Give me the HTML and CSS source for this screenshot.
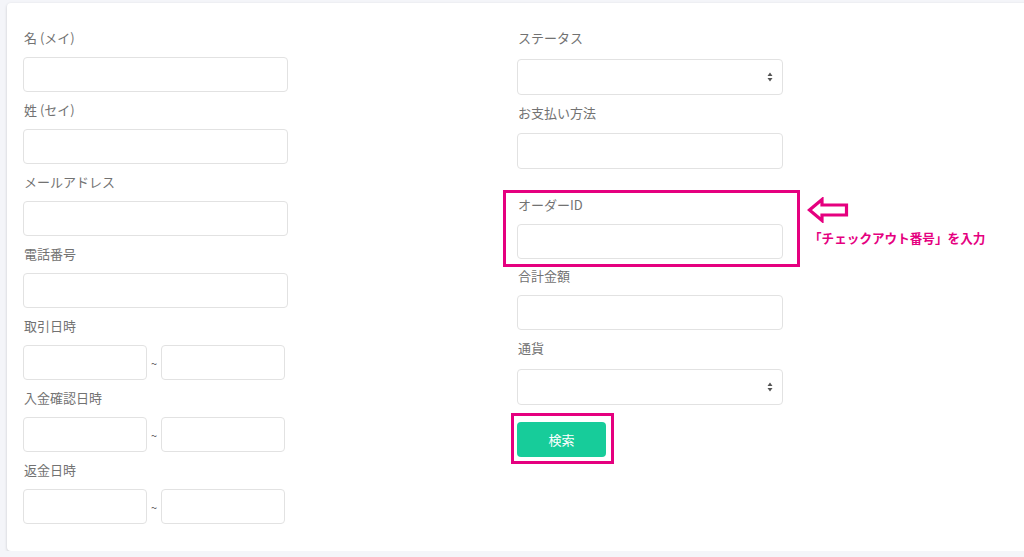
FILE: index.html
```html
<!DOCTYPE html>
<html>
<head>
    <meta charset="utf-8">
    <title>注文検索</title>
    <link rel="stylesheet" href="styles.css">
</head>
<body>
    <div class="card">
        <form class="search-form">
            <div class="column">
                <div class="field">
                    <label>名 (メイ)</label>
                    <input type="text" class="text-input">
                </div>
                <div class="field">
                    <label>姓 (セイ)</label>
                    <input type="text" class="text-input">
                </div>
                <div class="field">
                    <label>メールアドレス</label>
                    <input type="text" class="text-input">
                </div>
                <div class="field">
                    <label>電話番号</label>
                    <input type="text" class="text-input">
                </div>
                <div class="field">
                    <label>取引日時</label>
                    <div class="range">
                        <input type="text" class="text-input short">
                        <span class="tilde">~</span>
                        <input type="text" class="text-input short">
                    </div>
                </div>
                <div class="field">
                    <label>入金確認日時</label>
                    <div class="range">
                        <input type="text" class="text-input short">
                        <span class="tilde">~</span>
                        <input type="text" class="text-input short">
                    </div>
                </div>
                <div class="field">
                    <label>返金日時</label>
                    <div class="range">
                        <input type="text" class="text-input short">
                        <span class="tilde">~</span>
                        <input type="text" class="text-input short">
                    </div>
                </div>
            </div>

            <div class="column right">
                <div class="field">
                    <label>ステータス</label>
                    <div class="select-box">
                        <span class="select-arrows">
                            <svg width="6" height="10" viewBox="0 0 6 10"><path d="M3 0.5 L5.5 4 L0.5 4 Z M3 9.5 L5.5 6 L0.5 6 Z" fill="#555"/></svg>
                        </span>
                    </div>
                </div>
                <div class="field">
                    <label>お支払い方法</label>
                    <input type="text" class="text-input tall">
                </div>
                <div class="field marked">
                    <label>オーダーID</label>
                    <input type="text" class="text-input">
                    <div class="note">
                        <svg class="note-arrow" width="42" height="26" viewBox="0 0 42 26">
                            <path d="M2.5 13 L15 2.5 L15 8 L39.5 8 L39.5 18 L15 18 L15 23.5 Z" fill="none" stroke="#e5007f" stroke-width="3.2" stroke-linejoin="miter"/>
                        </svg>
                        <span class="note-text">「チェックアウト番号」を入力</span>
                    </div>
                </div>
                <div class="field after-mark">
                    <label>合計金額</label>
                    <input type="text" class="text-input">
                </div>
                <div class="field">
                    <label>通貨</label>
                    <div class="select-box">
                        <span class="select-arrows">
                            <svg width="6" height="10" viewBox="0 0 6 10"><path d="M3 0.5 L5.5 4 L0.5 4 Z M3 9.5 L5.5 6 L0.5 6 Z" fill="#555"/></svg>
                        </span>
                    </div>
                </div>
                <div class="button-mark">
                    <button type="button" class="search-btn">検索</button>
                </div>
            </div>
        </form>
    </div>
</body>
</html>
```

FILE: styles.css
```css
body {
    margin: 0;
    padding: 0;
    background-color: #f4f5f9;
    font-family: "Noto Sans CJK JP", "Noto Sans", sans-serif;
    font-size: 13px;
    color: #727272;
    overflow: hidden;
}

.card {
    margin: 3px -20px 0 7px;
    height: 548px;
    box-sizing: border-box;
    background-color: #fff;
    border-radius: 4px;
    box-shadow: 0 1px 3px rgba(0, 0, 0, 0.18);
    padding: 25px 0 0 16px;
}

.search-form {
    display: grid;
    grid-template-columns: 494px 1fr;
}

.column {
    display: flex;
    flex-direction: column;
}

.field {
    display: flex;
    flex-direction: column;
    margin-bottom: 8px;
}

.field label {
    height: 20px;
    line-height: 20px;
    margin-bottom: 9px;
    padding-left: 1px;
}

.text-input {
    width: 265px;
    height: 35px;
    box-sizing: border-box;
    border: 1px solid #e2e2e2;
    border-radius: 4px;
    background: #fff;
    margin: 0;
    padding: 0 10px;
    font: inherit;
    outline: none;
}

.right .text-input {
    width: 266px;
}

.text-input.tall {
    height: 36px;
}

.range {
    display: flex;
    align-items: center;
}

.text-input.short {
    width: 124px;
}

.tilde {
    width: 14px;
    text-align: center;
    font-size: 11px;
    color: #555;
}

.right .field label {
    margin-bottom: 11px;
}

.select-box {
    width: 266px;
    height: 36px;
    box-sizing: border-box;
    border: 1px solid #e2e2e2;
    border-radius: 4px;
    display: flex;
    justify-content: flex-end;
    align-items: center;
    padding-right: 9px;
}

.select-arrows {
    display: flex;
}

.right .field:nth-child(2) label {
    margin-bottom: 10px;
}

.marked {
    position: relative;
    margin-top: 13px;
    margin-left: -14px;
    width: 297px;
    box-sizing: border-box;
    border: 3px solid #e5007f;
    padding: 2px 0 5px 11px;
    margin-bottom: 0;
}

.right .marked label {
    margin-bottom: 9px;
}

.note {
    position: absolute;
    left: 301px;
    top: 4px;
    width: 200px;
}

.note-arrow {
    display: block;
}

.note-text {
    display: block;
    margin-top: 5px;
    margin-left: 2px;
    font-size: 12.6px;
    font-weight: bold;
    color: #e5007f;
    white-space: nowrap;
}

.after-mark {
    margin-top: -1px;
}

.right .after-mark label {
    margin-bottom: 9px;
}

.button-mark {
    margin-top: 0;
    margin-left: -6px;
    width: 103px;
    box-sizing: border-box;
    border: 3px solid #e5007f;
    padding: 6px 5px 4px 3px;
}

.search-btn {
    width: 89px;
    height: 35px;
    border: none;
    border-radius: 4px;
    background-color: #17cc9a;
    color: #fff;
    font: inherit;
    font-size: 13px;
    cursor: pointer;
}
```
